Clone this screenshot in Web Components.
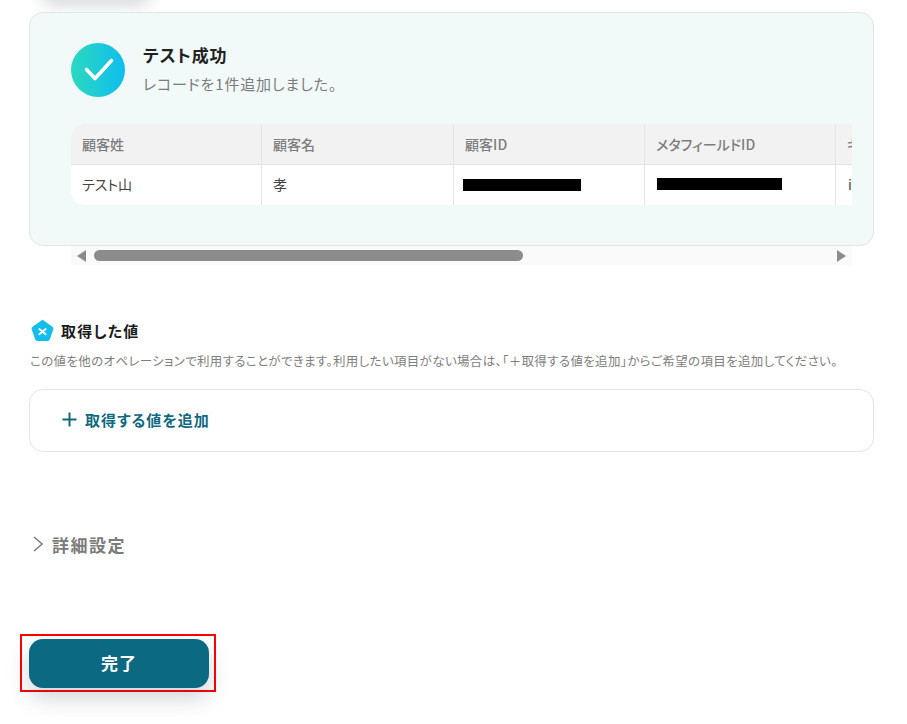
<!DOCTYPE html>
<html lang="ja">
<head>
<meta charset="utf-8">
<title>テスト成功</title>
<style>
  html, body { margin: 0; background: #fff; }
  body { font-family: "Noto Sans CJK JP", "Noto Sans", sans-serif; font-feature-settings: "palt"; height: 724px; overflow: hidden; }
  main { display: block; padding: 0 33px 0 29px; }
</style>
</head>
<body>
<main>
  <top-shadow></top-shadow>
  <result-card title="テスト成功" message="レコードを1件追加しました。">
    <record-table></record-table>
  </result-card>
  <fake-scrollbar></fake-scrollbar>
  <section-title>取得した値</section-title>
  <hint-text>この値を他のオペレーションで利用することができます。利用したい項目がない場合は、「＋取得する値を追加」からご希望の項目を追加してください。</hint-text>
  <add-value>取得する値を追加</add-value>
  <detail-toggle>詳細設定</detail-toggle>
  <done-button>完了</done-button>
</main>

<script>
class TopShadow extends HTMLElement {
	constructor() {
		super();
		this.attachShadow({ mode: 'open' });
		this.shadowRoot.innerHTML = `
      <style>
        :host { display: block; height: 12px; overflow: hidden; }
        div {
          width: 110px;
          height: 40px;
          margin: -41px 0 0 12px;
          border-radius: 14px;
          box-shadow: 0 8px 14px rgba(40, 50, 60, 0.16);
        }
      </style>
      <div></div>
    `;
	}
}

class ResultCard extends HTMLElement {
	constructor() {
		super();
		this.attachShadow({ mode: 'open' });
		this.shadowRoot.innerHTML = `
      <style>
        :host {
          display: block;
          box-sizing: border-box;
          height: 234px;
          padding: 30px 20px 0 41px;
          background: #f1faf9;
          border: 1px solid #e2e6e6;
          border-radius: 14px;
        }
        .head { display: flex; gap: 18px; height: 81px; }
        svg { width: 54px; height: 54px; flex: none; }
        .title { font-size: 17px; line-height: 24px; font-weight: 700; letter-spacing: 0.9px; color: #222; }
        .message { margin-top: 7px; font-size: 15px; line-height: 20px; letter-spacing: 0.85px; color: #7b7b7b; }
      </style>
      <div class="head">
        <svg viewBox="0 0 54 54">
          <defs>
            <linearGradient id="grad" x1="0" y1="0" x2="1" y2="0">
              <stop offset="0" stop-color="#2bd9bf"/>
              <stop offset="1" stop-color="#0fbdee"/>
            </linearGradient>
          </defs>
          <circle cx="27" cy="27" r="27" fill="url(#grad)"/>
          <path d="M15.5 26.5 L24 35.5 L40.5 17.5" fill="none" stroke="#fff" stroke-width="3.6" stroke-linecap="round" stroke-linejoin="round"/>
        </svg>
        <div>
          <div class="title"></div>
          <div class="message"></div>
        </div>
      </div>
      <slot></slot>
    `;
	}

	connectedCallback() {
		this.shadowRoot.querySelector('.title').textContent = this.getAttribute('title');
		this.shadowRoot.querySelector('.message').textContent = this.getAttribute('message');
	}
}

class RecordTable extends HTMLElement {
	constructor() {
		super();
		this.attachShadow({ mode: 'open' });
		this.shadowRoot.innerHTML = `
      <style>
        :host {
          display: block;
          width: 781px;
          height: 81px;
          overflow: hidden;
          border-radius: 14px 0 0 14px;
          background: #fff;
        }
        .grid {
          display: grid;
          grid-template-columns: 191px 192px 191px 191px 191px;
          grid-template-rows: 41px 40px;
          width: 956px;
        }
        .cell {
          box-sizing: border-box;
          display: flex;
          align-items: center;
          padding: 0 10px 0 11px;
          border-right: 1px solid #e4e4e4;
          font-size: 14px;
          color: #444;
          white-space: nowrap;
        }
        .th {
          background: #f2f2f2;
          border-bottom: 1px solid #e4e4e4;
          padding-bottom: 1px;
          font-size: 14px;
          font-weight: 500;
          letter-spacing: 0.05px;
          color: #7e7e7e;
        }
        .td { padding-bottom: 2px; }
        .mask { display: block; height: 12px; background: #000; }
      </style>
      <div class="grid">
        <div class="cell th">顧客姓</div>
        <div class="cell th">顧客名</div>
        <div class="cell th">顧客ID</div>
        <div class="cell th">メタフィールドID</div>
        <div class="cell th">キー</div>
        <div class="cell td">テスト山</div>
        <div class="cell td">孝</div>
        <div class="cell" style="padding-left:9px"><span class="mask" style="width:118px"></span></div>
        <div class="cell" style="padding-left:12px"><span class="mask" style="width:125px;margin-top:-2px"></span></div>
        <div class="cell td" style="padding-left:12px">id</div>
      </div>
    `;
	}
}

class FakeScrollbar extends HTMLElement {
	constructor() {
		super();
		this.attachShadow({ mode: 'open' });
		this.shadowRoot.innerHTML = `
      <style>
        :host {
          display: flex;
          align-items: center;
          box-sizing: border-box;
          width: 781px;
          height: 19px;
          margin-left: 42px;
          padding: 0 6px 0 6px;
          background: #fafafa;
        }
        .arrow { flex: none; width: 0; height: 0; border-top: 6px solid transparent; border-bottom: 6px solid transparent; }
        .left { border-right: 9px solid #8c8c8c; }
        .right { border-left: 9px solid #8c8c8c; }
        .track { flex: 1; display: flex; padding: 0 8px; }
        .thumb { width: 429px; height: 11px; border-radius: 6px; background: #8c8c8c; }
      </style>
      <span class="arrow left"></span>
      <div class="track"><div class="thumb"></div></div>
      <span class="arrow right"></span>
    `;
	}
}

class SectionTitle extends HTMLElement {
	constructor() {
		super();
		this.attachShadow({ mode: 'open' });
		this.shadowRoot.innerHTML = `
      <style>
        :host {
          display: flex;
          align-items: center;
          gap: 7px;
          height: 24px;
          margin: 53px 0 0 2px;
          font-size: 15px;
          font-weight: 700;
          letter-spacing: 1.2px;
          color: #1c1c1c;
        }
        svg { width: 23px; height: 23px; flex: none; }
      </style>
      <svg viewBox="0 0 23 23">
        <path d="M11.5 1.5 L21 8.4 Q22 9.1 21.6 10.2 L18.2 20 Q17.8 21.2 16.6 21.2 L6.4 21.2 Q5.2 21.2 4.8 20 L1.4 10.2 Q1 9.1 2 8.4 Z" fill="#14bdeb" stroke="#14bdeb" stroke-width="1.4" stroke-linejoin="round"/>
        <path d="M8.3 10 L14.7 15.2 M14.7 10 L8.3 15.2" fill="none" stroke="#fff" stroke-width="1.8" stroke-linecap="round"/>
      </svg>
      <slot></slot>
    `;
	}
}

class HintText extends HTMLElement {
	constructor() {
		super();
		this.attachShadow({ mode: 'open' });
		this.shadowRoot.innerHTML = `
      <style>
        :host {
          display: block;
          margin: 9px 0 0 1px;
          font-size: 12.5px;
          line-height: 20px;
          letter-spacing: 0.34px;
          color: #7e7e7e;
          white-space: nowrap;
        }
      </style>
      <slot></slot>
    `;
	}
}

class AddValue extends HTMLElement {
	constructor() {
		super();
		this.attachShadow({ mode: 'open' });
		this.shadowRoot.innerHTML = `
      <style>
        :host {
          display: flex;
          align-items: center;
          gap: 8px;
          box-sizing: border-box;
          height: 63px;
          margin-top: 18px;
          padding: 0 0 2px 32px;
          background: #fff;
          border: 1px solid #e4e6e6;
          border-radius: 14px;
          font-size: 15px;
          font-weight: 700;
          letter-spacing: 1px;
          color: #11697f;
        }
        svg { width: 15px; height: 15px; flex: none; }
      </style>
      <svg viewBox="0 0 15 15">
        <path d="M7.5 0.5 V14.5 M0.5 7.5 H14.5" fill="none" stroke="#11697f" stroke-width="2"/>
      </svg>
      <slot></slot>
    `;
	}
}

class DetailToggle extends HTMLElement {
	constructor() {
		super();
		this.attachShadow({ mode: 'open' });
		this.shadowRoot.innerHTML = `
      <style>
        :host {
          display: flex;
          align-items: center;
          gap: 9px;
          height: 28px;
          margin: 78px 0 0 4px;
          font-size: 17px;
          font-weight: 700;
          letter-spacing: 1.5px;
          color: #7b7b7b;
        }
        svg { width: 10px; height: 16px; flex: none; }
      </style>
      <svg viewBox="0 0 10 16">
        <path d="M1 1 L9.2 8 L1 15" fill="none" stroke="#7b7b7b" stroke-width="1.6"/>
      </svg>
      <slot></slot>
    `;
	}
}

class DoneButton extends HTMLElement {
	constructor() {
		super();
		this.attachShadow({ mode: 'open' });
		this.shadowRoot.innerHTML = `
      <style>
        :host {
          display: block;
          box-sizing: border-box;
          width: 196px;
          height: 58px;
          margin: 76px 0 0 -9px;
          padding: 3px 5px 2px 7px;
          border: 2px solid #ff0000;
        }
        button {
          display: block;
          width: 180px;
          height: 49px;
          padding: 0 0 2px;
          border: 0;
          border-radius: 14px;
          background: #0b6982;
          box-shadow: 0 10px 22px rgba(40, 60, 70, 0.22);
          font: 700 17px "Noto Sans CJK JP", "Noto Sans", sans-serif;
          font-feature-settings: "palt";
          letter-spacing: 1px;
          color: #fff;
        }
      </style>
      <button><slot></slot></button>
    `;
	}
}

customElements.define('top-shadow', TopShadow);
customElements.define('result-card', ResultCard);
customElements.define('record-table', RecordTable);
customElements.define('fake-scrollbar', FakeScrollbar);
customElements.define('section-title', SectionTitle);
customElements.define('hint-text', HintText);
customElements.define('add-value', AddValue);
customElements.define('detail-toggle', DetailToggle);
customElements.define('done-button', DoneButton);
</script>
</body>
</html>
